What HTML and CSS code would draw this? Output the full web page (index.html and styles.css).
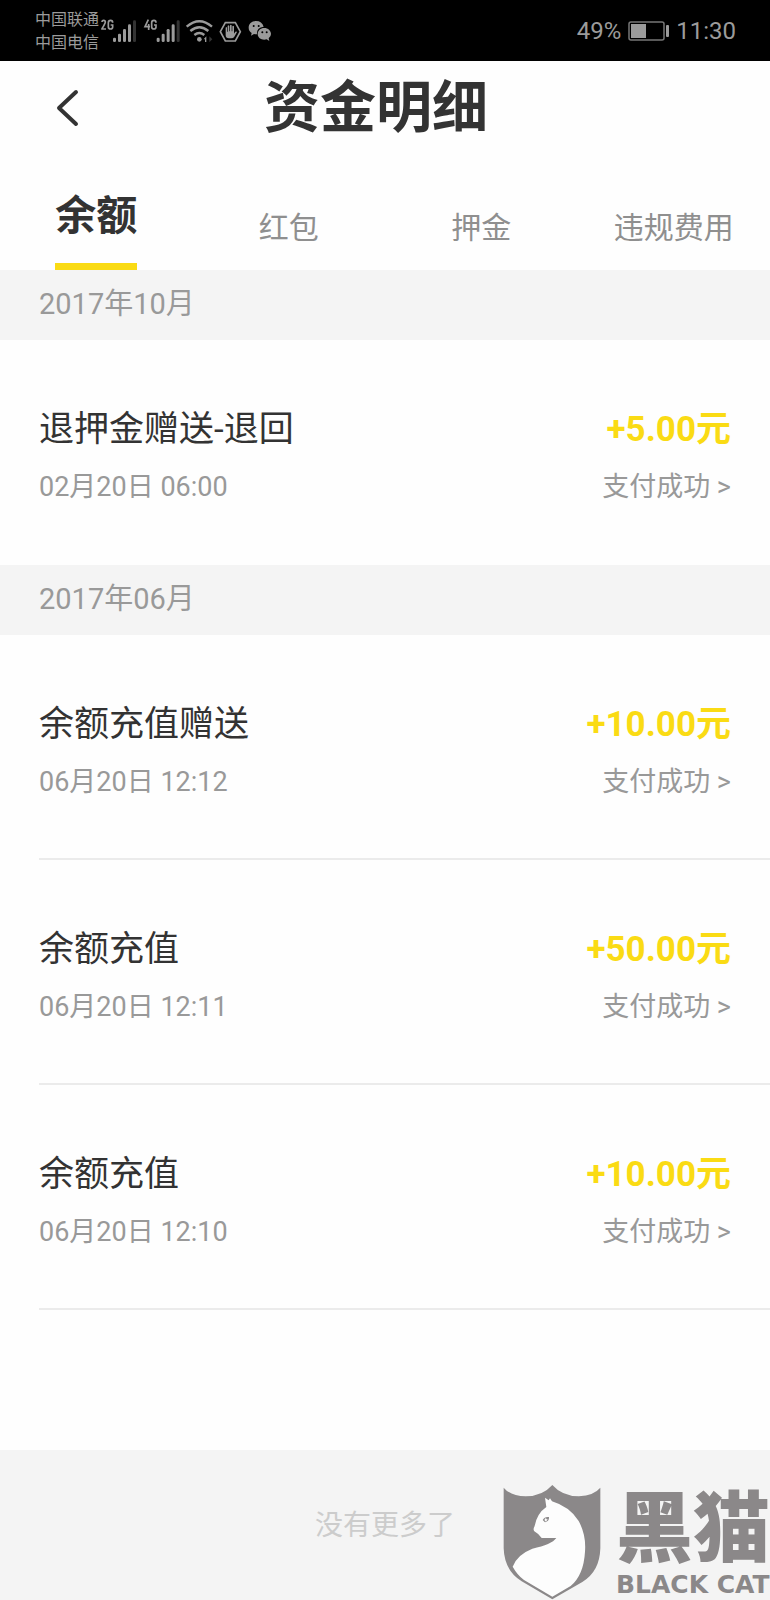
FILE: index.html
```html
<!DOCTYPE html>
<html lang="zh-CN">
<head>
    <meta charset="UTF-8">
    <meta name="viewport" content="width=device-width, initial-scale=1.0">
    <title>资金明细</title>
    <link rel="stylesheet" href="styles.css">
</head>
<body>

<!-- Status bar -->
<div class="status-bar">
    <div class="carriers">
        <span>中国联通</span>
        <span>中国电信</span>
    </div>
    <svg class="status-icons" width="173" height="36" viewBox="9 0 519 108" fill="#9b9b9b">
        <g fill="none" stroke="#9b9b9b" stroke-width="5">
            <path d="M18 27 Q18 22 23 22 Q28 22 28 27 Q28 31 18 47 V48 H30"/>
            <path d="M50 29 Q50 22 44 22 Q37 22 37 29 V42 Q37 48 44 48 Q50 48 50 42 V36 H44"/>
            <path d="M157 20 L147 41 H162 M158 33 V51"/>
            <path d="M180 29 Q180 22 174 22 Q167 22 167 29 V42 Q167 48 174 48 Q180 48 180 42 V36 H174"/>
        </g>
        <rect x="51" y="74" width="9" height="13" rx="4"/>
        <rect x="66" y="62" width="9" height="25" rx="4"/>
        <rect x="81" y="48" width="9" height="39" rx="4"/>
        <rect x="96" y="34" width="9" height="53" rx="4"/>
        <rect x="111" y="22" width="9" height="65" rx="4" fill="#333"/>
        <rect x="182" y="74" width="9" height="13" rx="4"/>
        <rect x="197" y="62" width="9" height="25" rx="4"/>
        <rect x="212" y="48" width="9" height="39" rx="4"/>
        <rect x="227" y="34" width="9" height="53" rx="4"/>
        <rect x="242" y="22" width="9" height="65" rx="4" fill="#333"/>
        <g fill="none" stroke="#9b9b9b" stroke-width="7">
            <path d="M272 41 Q310 8 348 41"/>
            <path d="M283 54 Q310 31 337 54"/>
            <path d="M295 66 Q310 54 325 66"/>
            <path d="M388 29 H418 L433 56 L418 84 H388 L373 56 Z" stroke-width="5"/>
        </g>
        <circle cx="310" cy="79" r="7"/>
        <path d="M323 79 L331 70 V87 H327 V79 Z"/>
        <path d="M340 70 L349 79 L340 88 Z" fill="#333"/>
        <path d="M389 44 q2 -4 4 0 v12 h2 v-17 q2 -4 5 0 v16 h2 v-18 q2 -4 5 0 v18 h2 v-15 q2 -4 5 0 v22 l4 -6 q4 -2 5 1 l-8 14 q-3 5 -9 5 h-7 q-10 0 -10 -10 Z"/>
        <path d="M480 24 c-14 0 -22 9 -22 20 c0 7 3 12 9 16 l-2 8 l9 -5 q5 1 9 1 q-2 -20 20 -23 q-5 -17 -23 -17 Z"/>
        <path d="M505 45 c-12 0 -20 8 -20 18 c0 13 14 20 27 16 l8 5 l-2 -8 q7 -5 7 -13 c0 -10 -9 -18 -20 -18 Z"/>
        <g fill="#000">
            <circle cx="473" cy="39" r="3"/>
            <circle cx="488" cy="39" r="3"/>
            <circle cx="499" cy="58" r="3"/>
            <circle cx="512" cy="58" r="3"/>
        </g>
    </svg>
    <div class="status-right">
        <span>49%</span>
        <svg width="41" height="21" viewBox="0 0 41 21">
            <rect x="1" y="1" width="35" height="18" rx="2" fill="none" stroke="#777" stroke-width="1.5"/>
            <rect x="3" y="3" width="15" height="14" fill="#9b9b9b"/>
            <rect x="38" y="4" width="3" height="12" rx="1" fill="#9b9b9b"/>
        </svg>
        <span>11:30</span>
    </div>
</div>

<!-- Header -->
<header class="header">
    <button class="back" type="button" aria-label="返回">
        <svg width="24" height="40" viewBox="0 0 24 40" fill="none" stroke="#333" stroke-width="4" stroke-linecap="round" stroke-linejoin="round">
            <path d="M20 4 L3 20 L20 36"/>
        </svg>
    </button>
    <h1>资金明细</h1>
</header>

<nav class="tabs">
    <button class="tab active" type="button">余额</button>
    <button class="tab" type="button">红包</button>
    <button class="tab" type="button">押金</button>
    <button class="tab" type="button">违规费用</button>
</nav>

<!-- Records -->
<main class="records">
    <h2 class="month">2017年10月</h2>
    <ul class="list">
        <li class="item">
            <div class="line">
                <span class="name">退押金赠送-退回</span>
                <span class="amount">+5.00元</span>
            </div>
            <div class="line">
                <span class="date">02月20日 06:00</span>
                <a class="state" href="#">支付成功 &gt;</a>
            </div>
        </li>
    </ul>

    <h2 class="month">2017年06月</h2>
    <ul class="list divided">
        <li class="item">
            <div class="line">
                <span class="name">余额充值赠送</span>
                <span class="amount">+10.00元</span>
            </div>
            <div class="line">
                <span class="date">06月20日 12:12</span>
                <a class="state" href="#">支付成功 &gt;</a>
            </div>
        </li>
        <li class="item">
            <div class="line">
                <span class="name">余额充值</span>
                <span class="amount">+50.00元</span>
            </div>
            <div class="line">
                <span class="date">06月20日 12:11</span>
                <a class="state" href="#">支付成功 &gt;</a>
            </div>
        </li>
        <li class="item">
            <div class="line">
                <span class="name">余额充值</span>
                <span class="amount">+10.00元</span>
            </div>
            <div class="line">
                <span class="date">06月20日 12:10</span>
                <a class="state" href="#">支付成功 &gt;</a>
            </div>
        </li>
    </ul>
</main>

<footer class="footer">
    <p>没有更多了</p>
    <!-- Black Cat mark over the footer -->
    <div class="watermark">
        <svg width="98" height="116" viewBox="62 72 294 348">
            <path fill="#8b8889" d="M64 83 Q85 108 130 109 Q180 109 210 75 Q240 109 290 109 Q335 106 354 83 V265 Q352 335 300 366 L210 418 L118 364 Q66 332 64 265 Z"/>
            <path fill="#fdfdfd" d="M188 113 L199 121 L203 115 L209 124 Q262 140 289 183 Q312 225 308 275 Q304 345 265 378 L210 410 L125 360 Q105 345 91 320 Q104 284 150 266 Q208 254 222 234 L178 234 Q170 222 156 214 Q151 208 157 198 Q164 160 192 141 Z"/>
            <path fill="#8b8889" d="M181 180 Q187 169 200 171 Q201 184 188 187 Z"/>
            <path fill="#fdfdfd" d="M186 180 l5 -7 l1 5 l4 -1 l-5 8 Z"/>
        </svg>
        <div class="brand">
            <span class="brand-cn">黑猫</span>
            <span class="brand-en">BLACK CAT</span>
        </div>
    </div>
</footer>

</body>
</html>
```
FILE: styles.css
```css
* {
    box-sizing: border-box;
}
body {
    background-color: #fefefe;
    color: #333;
    font-family: Roboto, "Noto Sans CJK SC", sans-serif;
    margin: 0;
    min-height: 100vh;
    display: flex;
    flex-direction: column;
}
h1, h2, ul, p {
    margin: 0;
    padding: 0;
}
button {
    background: none;
    border: none;
    padding: 0;
    color: inherit;
    font-family: inherit;
    cursor: pointer;
}

/* Status bar */
.status-bar {
    display: flex;
    align-items: center;
    height: 61px;
    padding: 1px 34px 0 35px;
    background-color: #000;
    color: #9b9b9b;
}
.carriers {
    display: flex;
    flex-direction: column;
    font-size: 16px;
    line-height: 23px;
}
.status-icons {
    margin-right: auto;
}
.status-right {
    display: flex;
    align-items: center;
    gap: 7px;
    font-size: 24px;
}

/* Header */
.header {
    display: grid;
    grid-template-columns: 96px 1fr 114px;
    align-items: center;
    height: 93px;
}
.back {
    justify-self: end;
    display: flex;
    margin-right: 16px;
}
.header h1 {
    text-align: center;
    font-size: 56px;
    line-height: 64px;
    font-weight: bold;
}

/* Tabs */
.tabs {
    display: grid;
    grid-template-columns: repeat(4, 1fr);
    justify-items: center;
    align-items: end;
    height: 116px;
}
.tab {
    padding-bottom: 20px;
    color: #8f8f8f;
    font-size: 30px;
    line-height: 44px;
}
.tab.active {
    padding-bottom: 25px;
    border-bottom: 7px solid #fadb14;
    color: #333;
    font-size: 41px;
    font-weight: bold;
}

/* Records */
.month {
    padding: 0 39px 1px;
    background-color: #f4f4f4;
    color: #999;
    font-size: 29px;
    font-weight: normal;
    line-height: 69px;
}
.list {
    list-style: none;
}
.item {
    display: flex;
    flex-direction: column;
    gap: 13px;
    height: 225px;
    margin-left: 39px;
    padding: 68px 39px 0 0;
}
.divided .item {
    border-bottom: 2px solid #ebebeb;
}
.line {
    display: flex;
    justify-content: space-between;
    line-height: 44px;
}
.name,
.amount {
    font-size: 35px;
}
.amount {
    color: #fadb14;
    font-weight: bold;
}
.date,
.state {
    color: #999;
    font-size: 27px;
    text-decoration: none;
}

/* Footer */
.footer {
    position: relative;
    margin-top: auto;
    height: 150px;
    background-color: #f4f4f4;
    color: #ccc;
    text-align: center;
    font-size: 28px;
    line-height: 152px;
}
.watermark {
    position: absolute;
    right: 0;
    bottom: 0;
    display: flex;
    gap: 15px;
    color: #8b8889;
}
.brand {
    display: flex;
    flex-direction: column;
    justify-content: flex-end;
    text-align: left;
}
.brand-cn {
    font-size: 77px;
    font-weight: 900;
    line-height: 80px;
}
.brand-en {
    font-family: "DejaVu Sans", sans-serif;
    font-size: 25px;
    font-weight: bold;
    line-height: 30px;
}
```
